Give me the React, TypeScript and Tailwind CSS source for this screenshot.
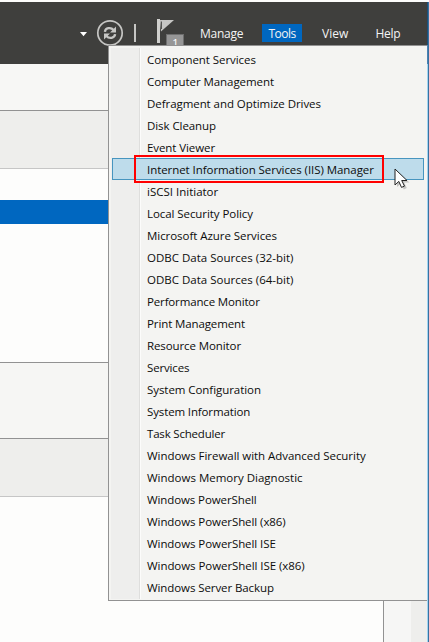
type Entry = { label: string; tracking: string };

const entries: Entry[] = [
  { label: 'Component Services', tracking: 'tracking-[-0.06px]' },
  { label: 'Computer Management', tracking: 'tracking-[-0.07px]' },
  { label: 'Defragment and Optimize Drives', tracking: 'tracking-[-0.06px]' },
  { label: 'Disk Cleanup', tracking: 'tracking-[-0.07px]' },
  { label: 'Event Viewer', tracking: 'tracking-[-0.08px]' },
  { label: 'Internet Information Services (IIS) Manager', tracking: 'tracking-[-0.06px]' },
  { label: 'iSCSI Initiator', tracking: 'tracking-[0px]' },
  { label: 'Local Security Policy', tracking: 'tracking-[-0.07px]' },
  { label: 'Microsoft Azure Services', tracking: 'tracking-[-0.05px]' },
  { label: 'ODBC Data Sources (32-bit)', tracking: 'tracking-[0.01px]' },
  { label: 'ODBC Data Sources (64-bit)', tracking: 'tracking-[0.01px]' },
  { label: 'Performance Monitor', tracking: 'tracking-[-0.15px]' },
  { label: 'Print Management', tracking: 'tracking-[-0.11px]' },
  { label: 'Resource Monitor', tracking: 'tracking-[-0.1px]' },
  { label: 'Services', tracking: 'tracking-[-0.15px]' },
  { label: 'System Configuration', tracking: 'tracking-[-0.06px]' },
  { label: 'System Information', tracking: 'tracking-[-0.13px]' },
  { label: 'Task Scheduler', tracking: 'tracking-[-0.19px]' },
  { label: 'Windows Firewall with Advanced Security', tracking: 'tracking-[-0.04px]' },
  { label: 'Windows Memory Diagnostic', tracking: 'tracking-[0px]' },
  { label: 'Windows PowerShell', tracking: 'tracking-[-0.1px]' },
  { label: 'Windows PowerShell (x86)', tracking: 'tracking-[-0.07px]' },
  { label: 'Windows PowerShell ISE', tracking: 'tracking-[-0.07px]' },
  { label: 'Windows PowerShell ISE (x86)', tracking: 'tracking-[-0.06px]' },
  { label: 'Windows Server Backup', tracking: 'tracking-[-0.09px]' },
];

const selected = 5;

function Toolbar() {
  return (
    <header className="flex h-[62px] shrink-0 items-start bg-[#3f3f3d] text-[12px] leading-[18px] text-[#f4f4f4]">
      <svg className="h-[44px] w-[192px] shrink-0" viewBox="0 2 192 44">
        <path d="M80 32h7l-3.5 4.2z" fill="#fff" />
        <circle cx="110" cy="33" r="12.2" fill="none" stroke="#c6c6c4" strokeWidth="1.7" />
        <g fill="none" stroke="#c6c6c4" strokeWidth="2.3">
          <path d="M104.9 31.8C105.3 27.8 110.8 26.8 113.6 30" />
          <path d="M115.1 34.2C114.7 38.2 109.2 39.2 106.4 36" />
        </g>
        <path d="M116 26.6v6h-6zM104 39.4v-6h6z" fill="#c6c6c4" />
        <path d="M134 24h2v18h-2z" fill="#c6c6c4" />
        <path d="M157 19h3v24h-3z" fill="#d0d0ce" />
        <path d="M160 20H174L161 31.5z" fill="#c6c6c4" />
        <path d="M161.5 21.5v7.5" stroke="#555553" />
        <rect x="166.5" y="34.5" width="17" height="14" fill="#969696" stroke="#6e6e6e" />
        <text x="172.2" y="47.4" fill="#fff" className="font-['Open_Sans',sans-serif] text-[11px]">1</text>
      </svg>
      <nav className="mt-[22px] flex">
        <span className="w-[70px] pt-px pl-2 tracking-[-0.25px]">Manage</span>
        <span className="h-[18px] w-[40px] bg-[#0067c0] pt-px pl-[6.5px] tracking-[-0.5px]">Tools</span>
        <span className="w-[54px] pt-px pl-[20px]">View</span>
        <span className="pt-px pl-[19.5px] tracking-[-0.25px]">Help</span>
      </nav>
    </header>
  );
}

function Cursor() {
  return (
    <svg className="absolute top-[122px] left-[285px] h-6 w-5" viewBox="0 0 20 24">
      <path d="M3 3v16l4-3.5 2.8 6 3-1.4-2.7-5.6h5.4z" fill="#555" opacity="0.3" />
      <path d="M1 1v16l3.8-3.6 2.7 6 3-1.3-2.8-5.6H13z" fill="#fff" stroke="#222" strokeWidth="1" />
    </svg>
  );
}

function ToolsMenu() {
  return (
    <div className="absolute top-[45px] left-[108px] h-[556px] w-[319px] border border-r-0 border-[#929292] bg-[#f4f4f2] pt-[2px] pl-[2px] text-[11.5px] text-[#0c0c0c]">
      <div className="h-[551px] bg-[linear-gradient(to_right,#eeeeed_28px,#dededd_28px,#dededd_29px,#fcfcfb_29px,#fcfcfb_30px,transparent_30px)]">
        {entries.map(({ label, tracking }, i) => (
          <div
            key={label}
            className={`ml-px flex h-[22px] w-[312px] items-center border pt-[2px] pl-[34px] whitespace-nowrap ${tracking} ${
              i === selected ? 'border-[#4795bf] bg-[#bedceb]' : 'border-transparent'
            }`}
          >
            {label}
          </div>
        ))}
      </div>
      <div className="absolute top-[109px] left-[25px] h-[28px] w-[250px] border-2 border-[#ff0000]" />
      <Cursor />
    </div>
  );
}

export default function App() {
  return (
    <div className="relative flex h-[642px] w-[429px] flex-col overflow-hidden bg-[#fdfdfc] pt-[2px] font-['Open_Sans','Noto_Sans',sans-serif]">
      <Toolbar />
      <main className="flex flex-1">
        <div className="w-[383px]">
          <div className="h-[47px] border-b border-[#929292] bg-[#f7f7f5]" />
          <div className="h-[58px] border-b border-[#c6c6c6] bg-[#eeeeec]" />
          <div className="h-[31px]" />
          <div className="h-6 bg-[#0067c0]" />
          <div className="h-[139px] border-b border-[#929292]" />
          <div className="h-[76px] border-b border-[#929292] bg-[#f6f6f4]" />
          <div className="h-[58px] border-b border-[#c6c6c6] bg-[#eeeeec]" />
        </div>
        <div className="w-[28px] border-l border-[#929292] bg-[#f6f6f5]" />
        <div className="flex-1 bg-[#eeeeec]" />
      </main>
      <div className="absolute top-[2px] right-0 bottom-0 flex w-[2px]">
        <div className="flex w-px flex-col">
          <div className="h-[43px] bg-[#1d4f78]" />
          <div className="h-[19px] bg-[#4a82b4]" />
          <div className="flex-1 bg-[#a0d4f2]" />
        </div>
        <div className="w-px bg-[#39719f]" />
      </div>
      <ToolsMenu />
    </div>
  );
}
